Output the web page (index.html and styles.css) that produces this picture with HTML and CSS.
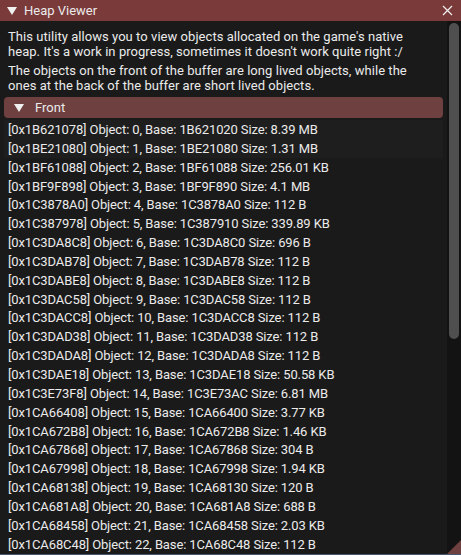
FILE: index.html
```html
<!DOCTYPE html>
<html>
<head>
<meta charset="utf-8">
<link rel="stylesheet" href="styles.css">
</head>
<body>
<div class="window">
  <div class="titlebar">
    <span class="tri"></span>
    <span class="title">Heap Viewer</span>
    <svg class="close" width="11" height="11" viewBox="0 0 11 11"><path d="M1 1L10 10M10 1L1 10" stroke="#f0f0f0" stroke-width="1.2"/></svg>
  </div>
  <div class="body">
    <div class="main">
      <p class="para">This utility allows you to view objects allocated on the game's native heap. It's a work in progress, sometimes it doesn't work quite right :/</p>
      <p class="para">The objects on the front of the buffer are long lived objects, while the ones at the back of the buffer are short lived objects.</p>
      <div class="header"><span class="tri small"></span><span>Front</span></div>
      <div class="list">
        <div class="hl">
          <div class="row">[0x1B621078] Object: 0, Base: 1B621020 Size: 8.39 MB</div>
          <div class="row">[0x1BE21080] Object: 1, Base: 1BE21080 Size: 1.31 MB</div>
        </div>
        <div class="row">[0x1BF61088] Object: 2, Base: 1BF61088 Size: 256.01 KB</div>
        <div class="row">[0x1BF9F898] Object: 3, Base: 1BF9F890 Size: 4.1 MB</div>
        <div class="row">[0x1C3878A0] Object: 4, Base: 1C3878A0 Size: 112 B</div>
        <div class="row">[0x1C387978] Object: 5, Base: 1C387910 Size: 339.89 KB</div>
        <div class="row">[0x1C3DA8C8] Object: 6, Base: 1C3DA8C0 Size: 696 B</div>
        <div class="row">[0x1C3DAB78] Object: 7, Base: 1C3DAB78 Size: 112 B</div>
        <div class="row">[0x1C3DABE8] Object: 8, Base: 1C3DABE8 Size: 112 B</div>
        <div class="row">[0x1C3DAC58] Object: 9, Base: 1C3DAC58 Size: 112 B</div>
        <div class="row">[0x1C3DACC8] Object: 10, Base: 1C3DACC8 Size: 112 B</div>
        <div class="row">[0x1C3DAD38] Object: 11, Base: 1C3DAD38 Size: 112 B</div>
        <div class="row">[0x1C3DADA8] Object: 12, Base: 1C3DADA8 Size: 112 B</div>
        <div class="row">[0x1C3DAE18] Object: 13, Base: 1C3DAE18 Size: 50.58 KB</div>
        <div class="row">[0x1C3E73F8] Object: 14, Base: 1C3E73AC Size: 6.81 MB</div>
        <div class="row">[0x1CA66408] Object: 15, Base: 1CA66400 Size: 3.77 KB</div>
        <div class="row">[0x1CA672B8] Object: 16, Base: 1CA672B8 Size: 1.46 KB</div>
        <div class="row">[0x1CA67868] Object: 17, Base: 1CA67868 Size: 304 B</div>
        <div class="row">[0x1CA67998] Object: 18, Base: 1CA67998 Size: 1.94 KB</div>
        <div class="row">[0x1CA68138] Object: 19, Base: 1CA68130 Size: 120 B</div>
        <div class="row">[0x1CA681A8] Object: 20, Base: 1CA681A8 Size: 688 B</div>
        <div class="row">[0x1CA68458] Object: 21, Base: 1CA68458 Size: 2.03 KB</div>
        <div class="row">[0x1CA68C48] Object: 22, Base: 1CA68C48 Size: 112 B</div>
      </div>
    </div>
    <div class="scrollbar"><div class="thumb"></div></div>
  </div>
  <div class="grip"></div>
</div>
</body>
</html>
```

FILE: styles.css
```css
html, body {
  margin: 0;
  padding: 0;
  background: #1a1a1a;
}
.window {
  position: relative;
  width: 461px;
  height: 555px;
  overflow: hidden;
  background: #1a1a1a;
  font-family: Roboto, "Noto Sans", sans-serif;
  font-size: 13px;
  color: #ebebeb;
  display: flex;
  flex-direction: column;
  box-sizing: border-box;
  border-bottom: 1px solid #4a5670;
}
.titlebar {
  height: 21px;
  flex: none;
  background: #7a3a3a;
  display: flex;
  align-items: center;
  padding-left: 7px;
  padding-right: 8px;
}
.tri {
  width: 0;
  height: 0;
  border-left: 5px solid transparent;
  border-right: 5px solid transparent;
  border-top: 8px solid #f0f0f0;
  margin-right: 7px;
}
.title {
  flex: 1;
  line-height: 15px;
}
.close {
  display: block;
}
.body {
  flex: 1;
  display: flex;
  min-height: 0;
}
.main {
  flex: 1;
  padding: 8px 4px 0 4px;
  display: flex;
  flex-direction: column;
  gap: 4px;
  min-width: 0;
}
.para {
  margin: 0;
  padding: 0 26px 0 4px;
  line-height: 15px;
  letter-spacing: 0.05px;
}
.header {
  height: 21px;
  flex: none;
  background: #6e4040;
  border-radius: 4px;
  display: flex;
  align-items: center;
  padding-left: 10px;
  line-height: 15px;
}
.tri.small {
  margin-right: 11px;
}
.list {
  display: flex;
  flex-direction: column;
  gap: 3.85px;
}
.hl {
  display: flex;
  flex-direction: column;
  gap: 3.85px;
  background: #1e1e1e;
  margin-top: -2px;
  padding-top: 2px;
  padding-bottom: 2px;
  margin-bottom: -2px;
}
.row {
  line-height: 15px;
  padding-left: 4px;
  white-space: nowrap;
  letter-spacing: -0.12px;
}
.scrollbar {
  width: 14px;
  flex: none;
  background: #131313;
  padding: 2px 2px 0 2px;
  box-sizing: border-box;
}
.thumb {
  height: 316px;
  background: #4f4f4f;
  border-radius: 5px;
}
.grip {
  position: absolute;
  right: 0;
  bottom: 0;
  width: 0;
  height: 0;
  border-left: 14px solid transparent;
  border-bottom: 14px solid #6e4040;
}
```
